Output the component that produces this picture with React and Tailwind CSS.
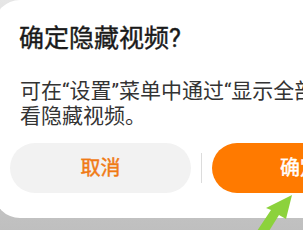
const FONT = "font-['Roboto','Noto_Sans_CJK_SC',sans-serif]";

const Arrow = () => (
    <svg className="absolute inset-0 pointer-events-none" width="303" height="230" viewBox="0 0 303 230">
        <polygon
            points="292,195 286,219 279,215 269,231 257,231 271,210 266,208"
            fill="#8cd23c"
        />
    </svg>
);

const App = () => {
    return (
        <div className={`relative w-[303px] h-[230px] overflow-hidden bg-linear-to-b from-[#e6e6e6] to-[#bfbfbf] ${FONT}`}>
            <div className="ml-[-6px] w-[415px] bg-white rounded-[26px] flex flex-col">
                <h1 className="pl-[25px] pt-[22px] text-[25px] leading-[33px] font-normal text-[#1a1a1a] [-webkit-text-stroke:0.4px_#1a1a1a]">
                    确定隐藏视频?
                </h1>
                <p className="pl-[26px] mt-[24px] text-[21px] leading-[25px] text-[#333333] whitespace-nowrap">
                    可在“设置”菜单中通过“显示全部视频”查
                    <br />
                    看隐藏视频。
                </p>
                <div className="flex items-center pl-[16px] mt-[14px] mb-[25px]">
                    <button className="w-[181px] h-[50px] rounded-full bg-[#f2f2f2] text-[20px] text-[#f07a14] [-webkit-text-stroke:0.45px_#f07a14]">
                        取消
                    </button>
                    <div className="mx-[10px] w-px h-[30px] bg-[#dcdcdc]" />
                    <button className="w-[176px] h-[50px] rounded-full bg-[#ff7a00] text-[20px] text-white [-webkit-text-stroke:0.45px_#ffffff]">
                        确定
                    </button>
                </div>
            </div>
            <Arrow />
        </div>
    );
};

export default App;
